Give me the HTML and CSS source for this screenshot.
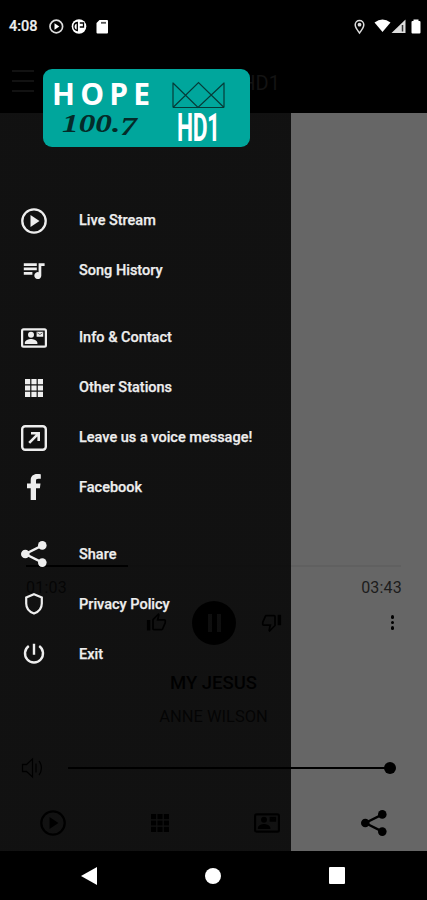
FILE: index.html
```html
<!DOCTYPE html>
<html lang="en">
<head>
<meta charset="UTF-8" />
<meta name="viewport" content="width=device-width, initial-scale=1" />
<title>HOPE 100.7 HD1</title>
<link rel="stylesheet" href="styles.css">
</head>
<body>
  <!-- shared icons -->
  <svg class="sprite" aria-hidden="true">
    <symbol id="play" viewBox="0 0 26 26">
      <circle cx="13" cy="13" r="11.7" fill="none" stroke="currentColor" stroke-width="2.3"/>
      <path d="M9.5 7v12l9-6z" fill="currentColor"/>
    </symbol>
    <symbol id="queue" viewBox="0 0 26 26">
      <path d="M2.8 5.2h13v2.7h-13zM2.8 9.6h13v2.700h-13zM2.8 14h8.6v2.700H2.8zM17.6 5.200h6v2.700h-3.300v9.700a3.500 3.500 0 1 1-2.700-3.400z" fill="currentColor"/>
    </symbol>
    <symbol id="contact" viewBox="0 0 26 26">
      <rect x="1.1" y="4.3" width="23.8" height="17.4" rx="1.4" fill="none" stroke="currentColor" stroke-width="2.2"/>
      <circle cx="10" cy="9.7" r="3" fill="currentColor"/>
      <path d="M3.8 19v-1.2c0-2.3 4-3.7 6.2-3.7s6.4 1.4 6.4 3.7V19zM15.6 6.8h6.6v5h-6.6z" fill="currentColor"/>
      <path d="M16.3 7.8l2.6 1.8 2.6-1.8" fill="none" stroke="#111" stroke-width=".6"/>
    </symbol>
    <symbol id="grid" viewBox="0 0 26 26">
      <path d="M4 4h5.2v5.2H4zM10.4 4h5.2v5.2h-5.2zM16.8 4H22v5.200h-5.200zM4 10.400h5.200v5.200H4zM10.400 10.400h5.200v5.200h-5.200zM16.800 10.400H22v5.200h-5.200zM4 16.800h5.200V22H4zM10.400 16.800h5.200V22h-5.200zM16.800 16.800H22V22h-5.200z" fill="currentColor"/>
    </symbol>
    <symbol id="open" viewBox="0 0 26 26">
      <rect x="1.2" y="1.2" width="23.6" height="23.6" rx="3" fill="none" stroke="currentColor" stroke-width="2.4"/>
      <path d="M8.2 17.8l9.200-9.200M10 8.300h7.700V16" fill="none" stroke="currentColor" stroke-width="2.600"/>
    </symbol>
    <symbol id="facebook" viewBox="0 0 26 26">
      <path d="M9.700 26V14.200H6V9.600h3.700V6.200C9.700 2.200 12.400 0 16 0c1.700 0 3.400.1 3.800.2v4.500h-2.500c-2 0-2.300.9-2.300 2.300v2.600h4.500l-.6 4.600H15V26z" fill="currentColor"/>
    </symbol>
    <symbol id="share" viewBox="0 0 26 26">
      <path d="M21.5 4.4L4.3 13l17.2 8.600" fill="none" stroke="currentColor" stroke-width="2.300"/>
      <circle cx="21.3" cy="4.4" r="4.3" fill="currentColor"/>
      <circle cx="4.3" cy="13" r="4.3" fill="currentColor"/>
      <circle cx="21.3" cy="21.6" r="4.3" fill="currentColor"/>
    </symbol>
    <symbol id="shield" viewBox="0 0 26 26">
      <path d="M13 3.300l7.800 3.200v6c0 4.600-3.200 8.400-7.800 10-4.600-1.600-7.800-5.400-7.800-10v-6z" fill="none" stroke="currentColor" stroke-width="2.200"/>
    </symbol>
    <symbol id="power" viewBox="0 0 26 26">
      <path d="M13 2.700v11M7.800 5.100a9 9 0 1 0 10.400 0" fill="none" stroke="currentColor" stroke-width="2.400"/>
    </symbol>
    <symbol id="thumb" viewBox="0 0 24 24">
      <path d="M9 21h9c.83 0 1.540-.5 1.840-1.220l3.020-7.050c.09-.23.14-.47.14-.73v-2c0-1.100-.9-2-2-2h-6.310l.95-4.570.03-.32c0-.41-.17-.79-.44-1.060L14.170 1 7.580 7.590C7.220 7.950 7 8.450 7 9v10c0 1.100.9 2 2 2zM9 9l4.340-4.340L12 10h9v2l-3 7H9V9zM1 9h4v12H1z" fill="currentColor"/>
    </symbol>
    <symbol id="volume" viewBox="0 0 24 24">
      <path d="M2 8.500h4l6-5.500v18l-6-5.500H2zM15.500 7.500v9M18.500 5c3.200 4 3.200 10 0 14" fill="none" stroke="currentColor" stroke-width="1.300"/>
    </symbol>
  </svg>

  <div class="phone">
    <div class="statusbar">
      <span class="clock">4:08</span>
      <svg class="status-left" viewBox="0 0 60 16">
        <circle cx="8.300" cy="7.500" r="6.300" fill="none" stroke="#ddd" stroke-width="1.700"/>
        <path d="M6.500 4.300v6.400l4.800-3.200z" fill="#fff"/>
        <circle cx="31" cy="7.500" r="7.300" fill="#fff"/>
        <path d="M29.300 3.500c-4.500 1-4.500 7 0 8zM31.800 4h3.700v4h-3.700" fill="none" stroke="#000" stroke-width="1.300"/>
        <path d="M51.500 1H59q1 0 1 1v11.500q0 1-1 1H49.500q-1 0-1-1V4z" fill="#fff"/>
        <path d="M53 3.800h5" stroke="#555" stroke-width="1.800"/>
      </svg>
      <svg class="status-right" viewBox="0 0 70 16">
        <path d="M8.500 14C6 10.500 4.200 8.500 4.200 5.700a4.300 4.300 0 0 1 8.600 0C12.800 8.500 11 10.500 8.500 14z" fill="none" stroke="#ddd" stroke-width="1.500"/>
        <circle cx="8.500" cy="5.700" r="1.900" fill="#ddd"/>
        <path d="M23.500 3.400q8-6 16 0L31.500 13z" fill="#fff"/>
        <path d="M40.500 14L54.500.5V14z" fill="#ddd"/>
        <path d="M51.500 6v6.500" stroke="#333" stroke-width="1.500"/>
        <path d="M60.500 3q0-1 1-1h1V.5h5V2h1q1 0 1 1v10.500q0 1-1 1h-7q-1 0-1-1z" fill="#fff"/>
      </svg>
    </div>

    <header class="appbar">
      <span class="burger"></span>
      <h1>HOPE 100.7 HD1</h1>
    </header>

    <main class="player">
      <div class="progress"><div class="played"></div></div>
      <div class="times"><span>01:03</span><span>03:43</span></div>
      <div class="controls">
        <svg class="thumb-up"><use href="#thumb"/></svg>
        <span class="pause"><i></i><i></i></span>
        <svg class="thumb-down"><use href="#thumb"/></svg>
        <span class="more"><i></i><i></i><i></i></span>
      </div>
      <h2>MY JESUS</h2>
      <p class="artist">ANNE WILSON</p>
      <div class="volume">
        <svg><use href="#volume"/></svg>
        <div class="slider"><span class="knob"></span></div>
      </div>
      <nav class="tabs">
        <svg><use href="#play"/></svg>
        <svg><use href="#grid"/></svg>
        <svg><use href="#contact"/></svg>
        <svg><use href="#share"/></svg>
      </nav>
    </main>

    <aside class="drawer">
      <svg class="logo" viewBox="0 0 207 78">
        <rect width="207" height="78" rx="9" fill="#00a69c"/>
        <text class="logo-hope" x="9" y="36" textLength="98">HOPE</text>
        <text class="logo-freq" x="19" y="62.500" textLength="75" lengthAdjust="spacingAndGlyphs">100.<tspan dy="3.500">7</tspan></text>
        <path d="M130 13.500V38.500M181 13.500V38.500M130 38.500H181M130 14L155 38.500 181 14M130 38.500L155.500 13.500 181 38.500" fill="none" stroke="#063b38" stroke-width="1.200"/>
        <text class="logo-hd" transform="translate(134 72) scale(.6 1)" textLength="72">HD1</text>
      </svg>
      <ul class="menu">
        <li><svg><use href="#play"/></svg>Live Stream</li>
        <li><svg><use href="#queue"/></svg>Song History</li>
        <li class="group"><svg><use href="#contact"/></svg>Info &amp; Contact</li>
        <li><svg><use href="#grid"/></svg>Other Stations</li>
        <li><svg><use href="#open"/></svg>Leave us a voice message!</li>
        <li><svg><use href="#facebook"/></svg>Facebook</li>
        <li class="group"><svg><use href="#share"/></svg>Share</li>
        <li><svg><use href="#shield"/></svg>Privacy Policy</li>
        <li><svg><use href="#power"/></svg>Exit</li>
      </ul>
    </aside>

    <footer class="navbar">
      <svg viewBox="0 0 16 18"><path d="M0 9L16 0v18z" fill="#fff"/></svg>
      <span class="home"></span>
      <span class="recent"></span>
    </footer>
  </div>
</body>
</html>
```
FILE: styles.css
```css
* { box-sizing: border-box; }
body {
  margin: 0; background: #000;
  font-family: Roboto, "Liberation Sans", sans-serif;
}
.sprite { position: absolute; width: 0; height: 0; }
.phone {
  position: relative; display: flex; flex-direction: column;
  width: 427px; height: 900px; overflow: hidden; background: #000;
}

/* status bar */
.statusbar {
  height: 53px; padding: 0 7px 0 9px;
  display: flex; align-items: center; color: #eee;
}
.clock { width: 39px; font-size: 14.5px; font-weight: 500; -webkit-text-stroke: .2px; }
.status-left { width: 60px; height: 16px; }
.status-right { width: 70px; height: 16px; margin-left: auto; margin-right: -1px; }

/* app bar */
.appbar {
  height: 60px; padding: 0 12px;
  display: flex; align-items: center; gap: 82px; color: #131313;
}
.burger {
  width: 22px; height: 22px; margin-top: -4px;
  border-top: 2px solid #121212; border-bottom: 2px solid #121212;
  background: linear-gradient(#121212, #121212) center / 100% 2px no-repeat;
}
h1 { margin: 0; width: 164px; text-align: right; font-size: 20px; font-weight: 400; white-space: nowrap; }

/* player */
.player {
  height: 738px; padding: 451.5px 26px 0;
  display: flex; flex-direction: column;
  background: #666; color: #000;
}
.progress { height: 2px; flex: none; background: #606060; }
.played { width: 102px; height: 2px; background: #000; }
.times {
  height: 42px; flex: none; display: flex; justify-content: space-between; align-items: center;
  margin-right: -1px; font-size: 16px; letter-spacing: .2px; color: #1c1c1c;
}
.controls {
  height: 44px; flex: none; padding: 0 5px 0 120px; margin-top: -8px;
  display: flex; align-items: center;
}
.thumb-up, .thumb-down { width: 21px; height: 21px; }
.thumb-down { transform: rotate(180deg); }
.pause {
  display: flex; justify-content: center; gap: 5px; align-items: center;
  width: 44px; height: 44px; margin: 0 25px;
  border-radius: 50%; background: #000;
}
.pause i { width: 4px; height: 18px; background: #555; }
.more { display: flex; flex-direction: column; gap: 2px; margin-left: auto; margin-right: 2px; }
.more i { width: 3.5px; height: 3.5px; border-radius: 50%; background: #000; }
h2 {
  margin: 26px 0 0; height: 24px; line-height: 24px;
  text-align: center; font-size: 18.5px; font-weight: 500;
}
.artist {
  margin: 10px 0 0; height: 24px; line-height: 24px;
  text-align: center; font-size: 16.5px; color: #181818;
}
.volume { height: 24px; margin-top: 27px; display: flex; align-items: center; }
.volume svg { width: 25px; height: 24px; margin-left: -6px; }
.slider {
  width: 322px; height: 2px; margin-left: 23px;
  display: flex; align-items: center; justify-content: flex-end; background: #000;
}
.knob { flex: none; width: 12px; height: 12px; margin-right: -6px; border-radius: 50%; background: #000; }
.tabs {
  margin: 30.5px -26px 0; height: 26px;
  display: grid; grid-template-columns: repeat(4, 1fr); justify-items: center;
}
.tabs svg { width: 26px; height: 26px; }

/* drawer */
.drawer {
  position: absolute; left: 0; top: 0; width: 291px; height: 851px;
  padding-top: 69px;
  background: linear-gradient(transparent 113px, rgba(0, 0, 0, .833) 113px);
}
.logo { display: block; width: 207px; height: 78px; margin-left: 42.5px; overflow: visible; }
.logo-hope { font: 700 30px "Open Sans", sans-serif; fill: #fff; }
.logo-freq { font: italic 700 26px "Liberation Serif", serif; fill: #042b29; }
.logo-hd { font: 700 38px Roboto, sans-serif; fill: #fff; }
.menu { list-style: none; margin: 49px 0 0; padding: 0; }
.menu li {
  height: 49.9px; padding-left: 21px;
  display: flex; align-items: center; gap: 32px;
  color: #eee; font-size: 14.5px; font-weight: 500; white-space: nowrap;
  -webkit-text-stroke: .25px;
}
.menu li.group { margin-top: 17px; }
.menu svg { width: 26px; height: 26px; flex: none; }

/* system navigation */
.navbar {
  height: 49px; padding: 0 82px 0 81px;
  display: flex; align-items: center; justify-content: space-between;
}
.navbar svg { width: 16px; height: 18px; }
.home { width: 16px; height: 16px; border-radius: 50%; background: #fff; }
.recent { width: 16px; height: 17px; border-radius: 1px; background: #fff; }
```
